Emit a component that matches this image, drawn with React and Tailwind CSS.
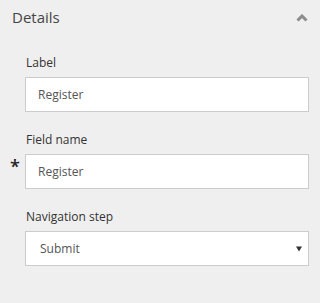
export default function App() {
  const Field = ({ label, value, required, select }) => (
    <div className="flex flex-col">
      <div className="pl-[26px] text-[12px] leading-[16px] text-[#333]">{label}</div>
      <div className="mt-[6px] flex">
        <div className="w-[25px] flex justify-start">
          {required && (
            <span className="ml-[10px] mt-[3px] text-[18px] leading-[18px] text-[#222] font-semibold">*</span>
          )}
        </div>
        <div
          className={`flex h-[35px] w-[284px] items-center border border-[#cccccc] bg-white text-[12px] text-[#555] ${
            select ? "pl-[14px] pr-[6px] justify-between" : "pl-[12px]"
          }`}
        >
          <span>{value}</span>
          {select && (
            <svg width="6" height="6" viewBox="0 0 6 6">
              <polygon points="0,0.5 6,0.5 3,5.5" fill="#333" />
            </svg>
          )}
        </div>
      </div>
    </div>
  );

  return (
    <div
      className="w-[320px] h-[303px] bg-[#efefef] overflow-hidden"
      style={{ fontFamily: '"Open Sans", sans-serif' }}
    >
      <div className="flex items-center justify-between pl-[12px] pr-[12px] pt-[7px] h-[27px]">
        <span className="text-[15px] leading-[20px] text-[#454545]">Details</span>
        <svg width="12" height="8" viewBox="0 0 12 8" className="mt-[1px]">
          <polyline points="1.5,6.5 6,2 10.5,6.5" fill="none" stroke="#8c8c8c" strokeWidth="3" />
        </svg>
      </div>
      <div className="mt-[28px] flex flex-col gap-[20px]">
        <Field label="Label" value="Register" />
        <Field label="Field name" value="Register" required />
        <Field label="Navigation step" value="Submit" select />
      </div>
    </div>
  );
}
